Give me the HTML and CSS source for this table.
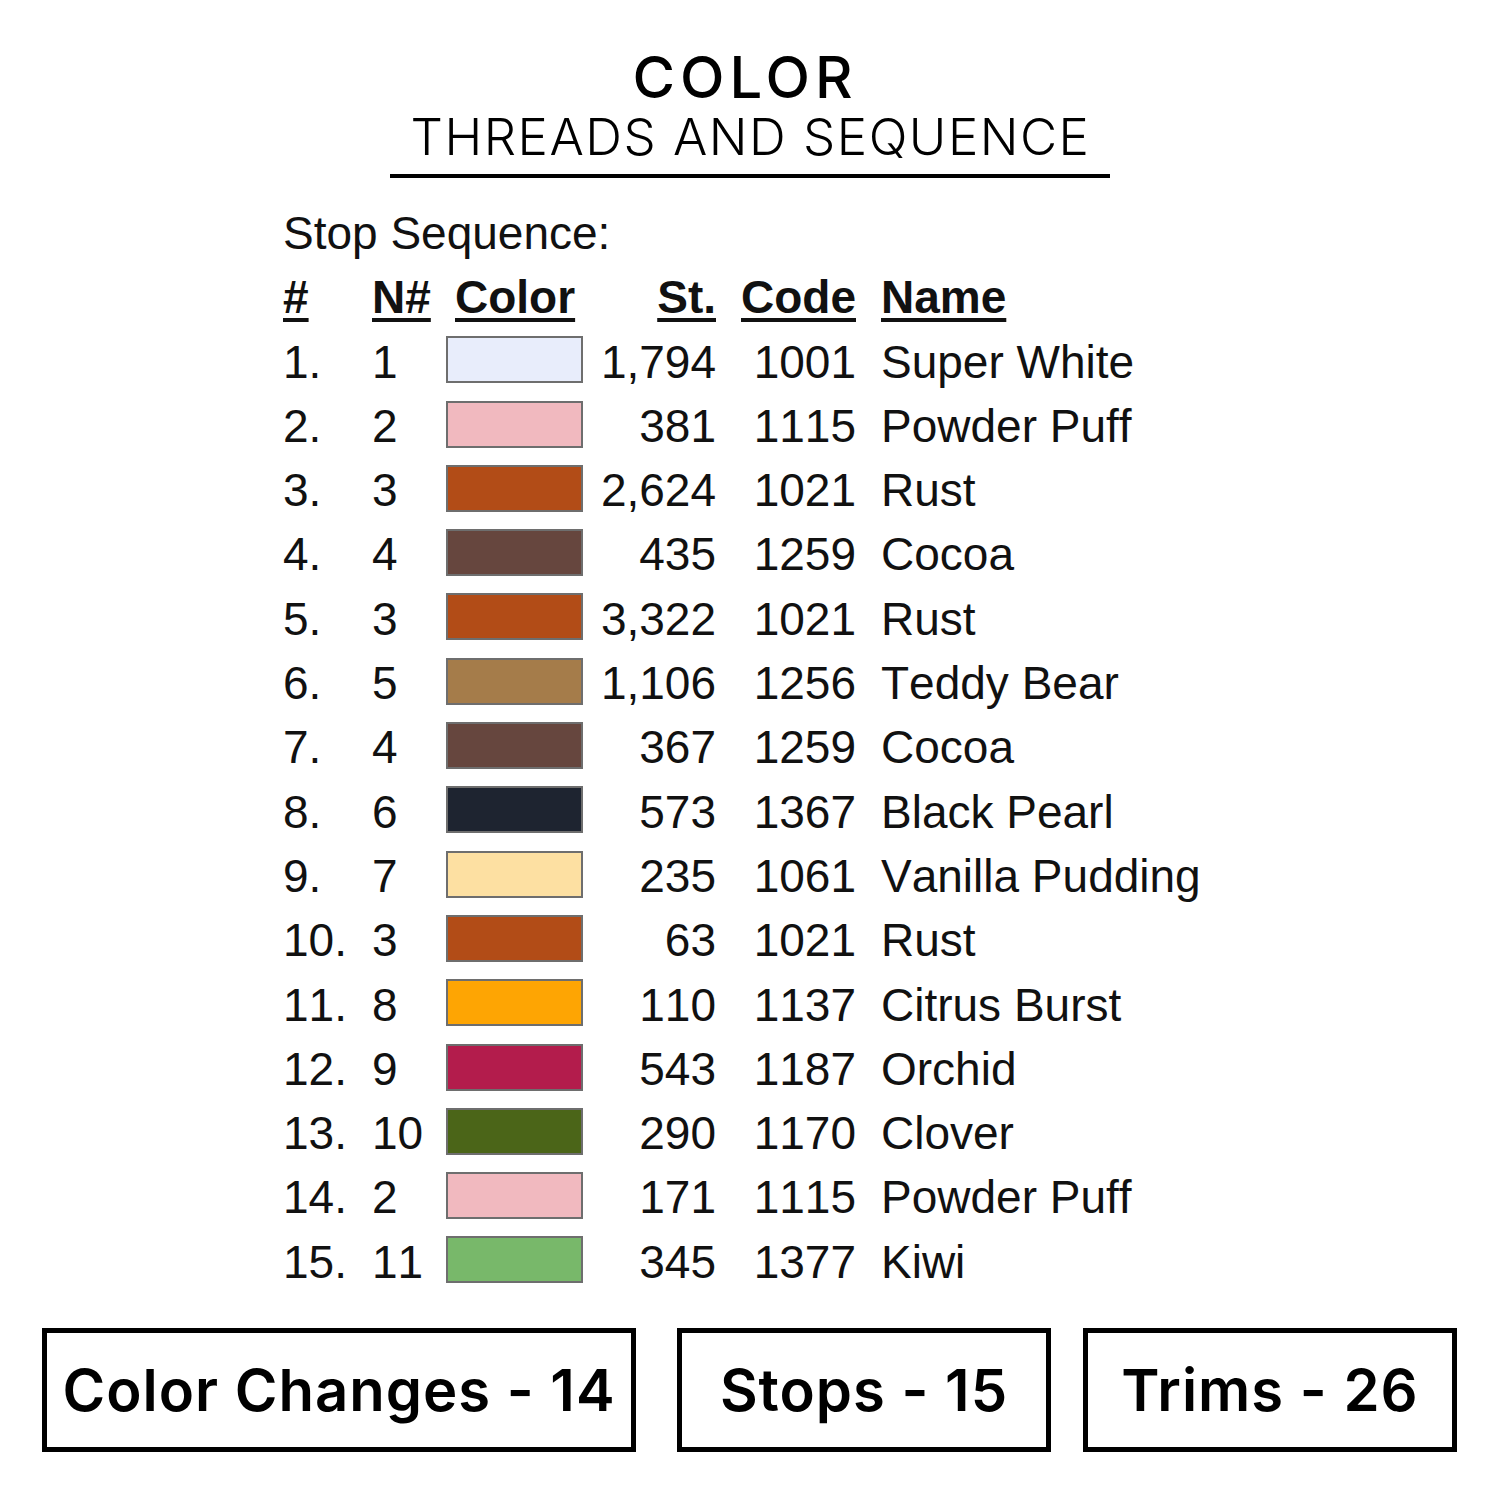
FILE: index.html
```html
<!DOCTYPE html>
<html lang="en">
<head>
<meta charset="utf-8">
<title>Color Threads and Sequence</title>
<link rel="stylesheet" href="styles.css">
</head>
<body>
<div class="page">
  <header class="title">
    <div class="title-main">COLOR</div>
    <div class="title-sub">THREADS AND SEQUENCE</div>
  </header>

  <section class="sequence">
    <div class="seq-label">Stop Sequence:</div>
    <div class="seq-grid">
      <div class="h">#</div><div class="h">N#</div><div class="h h-color">Color</div><div class="h r">St.</div><div class="h r">Code</div><div class="h name">Name</div>

      <div>1.</div><div>1</div><div class="sw" style="background:#e8edfb"></div><div class="r">1,794</div><div class="r">1001</div><div class="name">Super White</div>
      <div>2.</div><div>2</div><div class="sw" style="background:#f1b9bf"></div><div class="r">381</div><div class="r">1115</div><div class="name">Powder Puff</div>
      <div>3.</div><div>3</div><div class="sw" style="background:#b24c17"></div><div class="r">2,624</div><div class="r">1021</div><div class="name">Rust</div>
      <div>4.</div><div>4</div><div class="sw" style="background:#66463e"></div><div class="r">435</div><div class="r">1259</div><div class="name">Cocoa</div>
      <div>5.</div><div>3</div><div class="sw" style="background:#b24c17"></div><div class="r">3,322</div><div class="r">1021</div><div class="name">Rust</div>
      <div>6.</div><div>5</div><div class="sw" style="background:#a57c4a"></div><div class="r">1,106</div><div class="r">1256</div><div class="name">Teddy Bear</div>
      <div>7.</div><div>4</div><div class="sw" style="background:#66463e"></div><div class="r">367</div><div class="r">1259</div><div class="name">Cocoa</div>
      <div>8.</div><div>6</div><div class="sw" style="background:#1e2430"></div><div class="r">573</div><div class="r">1367</div><div class="name">Black Pearl</div>
      <div>9.</div><div>7</div><div class="sw" style="background:#fde0a2"></div><div class="r">235</div><div class="r">1061</div><div class="name">Vanilla Pudding</div>
      <div>10.</div><div>3</div><div class="sw" style="background:#b24c17"></div><div class="r">63</div><div class="r">1021</div><div class="name">Rust</div>
      <div>11.</div><div>8</div><div class="sw" style="background:#fea503"></div><div class="r">110</div><div class="r">1137</div><div class="name">Citrus Burst</div>
      <div>12.</div><div>9</div><div class="sw" style="background:#b31c4c"></div><div class="r">543</div><div class="r">1187</div><div class="name">Orchid</div>
      <div>13.</div><div>10</div><div class="sw" style="background:#4b6518"></div><div class="r">290</div><div class="r">1170</div><div class="name">Clover</div>
      <div>14.</div><div>2</div><div class="sw" style="background:#f1b9bf"></div><div class="r">171</div><div class="r">1115</div><div class="name">Powder Puff</div>
      <div>15.</div><div>11</div><div class="sw" style="background:#78b86a"></div><div class="r">345</div><div class="r">1377</div><div class="name">Kiwi</div>
    </div>
  </section>

  <footer class="stats">
    <div class="stat stat-wide">Color Changes - 14</div>
    <div class="stat stat-stops">Stops - 15</div>
    <div class="stat stat-trims">Trims - 26</div>
  </footer>
</div>
</body>
</html>
```

FILE: styles.css
```css
html, body {
  margin: 0;
  padding: 0;
  background: #ffffff;
}

.page {
  width: 1500px;
  height: 1500px;
  color: #000000;
  overflow: hidden;
}

.title {
  display: flex;
  flex-direction: column;
  align-items: center;
  padding-top: 46px;
  font-family: "Inter", "Lato", sans-serif;
}

.title-main {
  font-size: 58px;
  line-height: 62px;
  font-weight: 500;
  letter-spacing: 5px;
  margin-right: 10px;
}

.title-sub {
  font-size: 51px;
  line-height: 58px;
  font-weight: 300;
  letter-spacing: 1.5px;
  padding: 0 20px 8px 21px;
  border-bottom: 4px solid #000;
}

.sequence {
  padding-left: 283px;
  margin-top: 23px;
  font-family: "Liberation Sans", Arial, sans-serif;
  font-size: 46px;
  font-kerning: none;
  color: #111;
}

.seq-label {
  line-height: 64.3px;
}

.seq-grid {
  display: grid;
  grid-template-columns: 89px 74px 137px 133px 140px auto;
  grid-auto-rows: 64.3px;
  align-items: center;
  line-height: 64.3px;
}

.h {
  font-weight: bold;
  text-decoration: underline;
  text-decoration-thickness: 4px;
  text-underline-offset: 5px;
}

.h-color {
  padding-left: 9px;
}

.r {
  text-align: right;
}

.name {
  padding-left: 25px;
  white-space: nowrap;
}

.sw {
  height: 43px;
  border: 2px solid #6e6e6e;
  margin-bottom: 4px;
}

.stats {
  display: flex;
  margin-top: 34px;
  padding-left: 42px;
  font-family: "Inter", "Lato", sans-serif;
  font-weight: 600;
  font-size: 58px;
  letter-spacing: 1px;
}

.stat {
  box-sizing: border-box;
  height: 124px;
  border: 5px solid #000;
  display: flex;
  align-items: center;
  justify-content: center;
  white-space: nowrap;
}

.stat-wide {
  width: 594px;
}

.stat-stops {
  width: 374px;
  margin-left: 41px;
}

.stat-trims {
  width: 374px;
  margin-left: 32px;
}
```
